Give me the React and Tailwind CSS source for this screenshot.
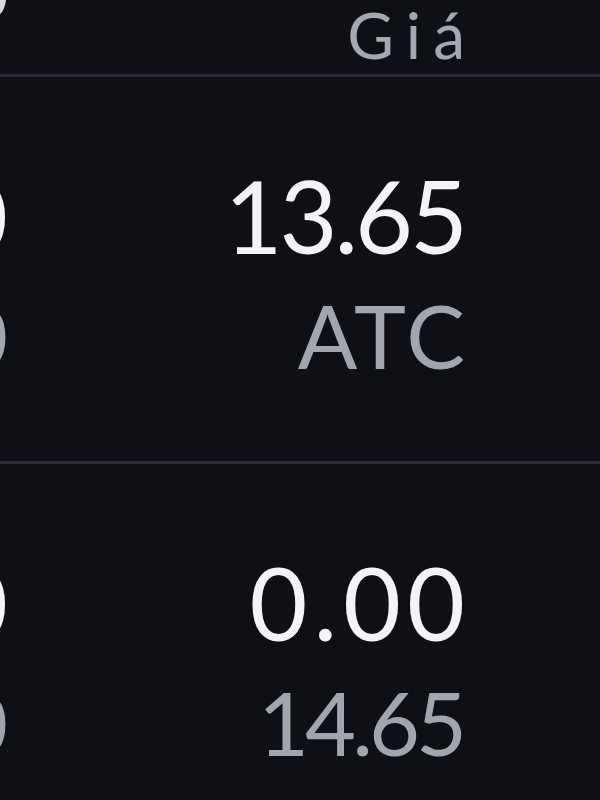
export default function App() {
  const rows = [
    {
      price: "13.65",
      priceCls: "tracking-[-3px] mr-0",
      sub: "ATC",
      subCls: "tracking-[3px] mr-[-3px]",
    },
    {
      price: "0.00",
      priceCls: "tracking-[6px] mr-[-6px]",
      sub: "14.65",
      subCls: "tracking-[-4px] mr-[2px]",
    },
  ];

  return (
    <div className="w-[600px] h-[800px] overflow-hidden bg-[#0f1016] font-['Lato',sans-serif]">
      {/* header */}
      <div className="flex h-[74px]">
        <div className="flex w-[8px] justify-end overflow-hidden">
          <span className="mt-[-38px] whitespace-nowrap text-[64px] leading-[64px] text-[#d8d9de]">0</span>
        </div>
        <div className="flex flex-1 justify-end pt-[3px] pr-[135px]">
          <span className="mr-[-12px] text-[64px] leading-[64px] tracking-[12px] text-[#a6a8b0]">Giá</span>
        </div>
      </div>
      <div className="h-[3px] bg-[#2a2b34]" />

      {rows.map((r, i) => (
        <div key={i}>
          <div className="flex h-[384px] pt-[88px]">
            <div className="flex w-[8px] flex-col items-end overflow-hidden">
              <span className="whitespace-nowrap text-[100px] leading-[100px] text-[#f4f4f6]">0</span>
              <span className="mt-[26px] whitespace-nowrap text-[88px] leading-[88px] text-[#a3a5ad]">0</span>
            </div>
            <div className="flex flex-1 flex-col items-end pr-[135px]">
              <span className={"text-[100px] leading-[100px] text-[#f4f4f6] " + r.priceCls}>{r.price}</span>
              <span className={"mt-[26px] text-[88px] leading-[88px] text-[#a3a5ad] " + r.subCls}>{r.sub}</span>
            </div>
          </div>
          {i === 0 && <div className="h-[3px] bg-[#2a2b34]" />}
        </div>
      ))}
    </div>
  );
}
